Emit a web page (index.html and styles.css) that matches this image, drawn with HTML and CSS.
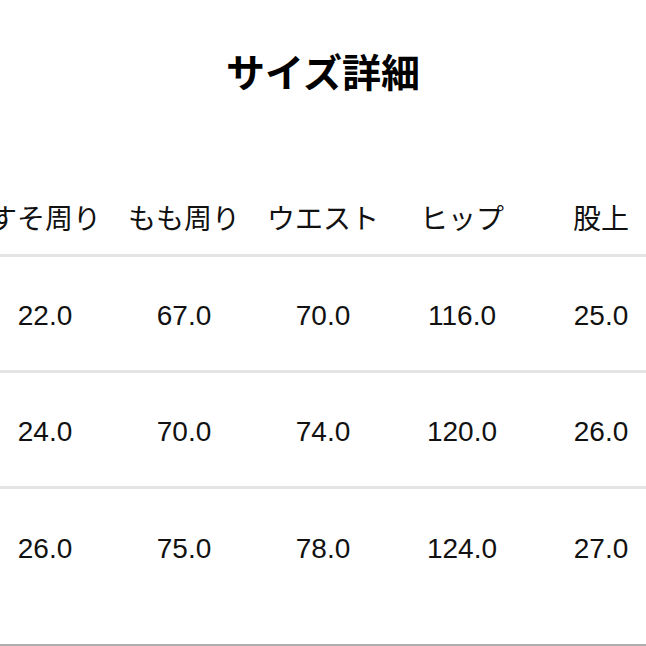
FILE: index.html
```html
<!DOCTYPE html>
<html lang="ja">
<head>
<meta charset="utf-8">
<link rel="stylesheet" href="styles.css">
</head>
<body>
<div class="page">
  <h1 class="title">サイズ詳細</h1>
  <div class="table-wrap">
    <div class="table">
      <div class="row head">
        <div class="cell">すそ周り</div>
        <div class="cell">もも周り</div>
        <div class="cell">ウエスト</div>
        <div class="cell">ヒップ</div>
        <div class="cell">股上</div>
      </div>
      <div class="row">
        <div class="cell">22.0</div>
        <div class="cell">67.0</div>
        <div class="cell">70.0</div>
        <div class="cell">116.0</div>
        <div class="cell">25.0</div>
      </div>
      <div class="row">
        <div class="cell">24.0</div>
        <div class="cell">70.0</div>
        <div class="cell">74.0</div>
        <div class="cell">120.0</div>
        <div class="cell">26.0</div>
      </div>
      <div class="row last">
        <div class="cell">26.0</div>
        <div class="cell">75.0</div>
        <div class="cell">78.0</div>
        <div class="cell">124.0</div>
        <div class="cell">27.0</div>
      </div>
    </div>
  </div>
  <div class="bottom-line"></div>
</div>
</body>
</html>
```

FILE: styles.css
```css
html, body {
  margin: 0;
  padding: 0;
  background: #ffffff;
}

body {
  font-family: "Liberation Sans", "Noto Sans CJK JP", sans-serif;
  color: #111111;
}

.page {
  width: 646px;
  height: 646px;
  overflow: hidden;
  display: flex;
  flex-direction: column;
}

.title {
  margin: 0;
  padding-top: 51px;
  font-family: "Noto Sans CJK JP", sans-serif;
  font-size: 39px;
  line-height: 39px;
  font-weight: 700;
  text-align: center;
  color: #000000;
}

.table-wrap {
  display: flex;
  justify-content: center;
  margin-top: 90px;
}

.table {
  flex: 0 0 695px;
  width: 695px;
}

.row {
  box-sizing: border-box;
  display: grid;
  grid-template-columns: repeat(5, 139px);
  align-items: center;
  height: 116px;
  padding-top: 4px;
  border-bottom: 3px solid #e4e4e4;
}

.row.head {
  height: 77px;
  padding-top: 0;
  font-family: "Noto Sans CJK JP", sans-serif;
}

.row.last {
  border-bottom: none;
}

.cell {
  text-align: center;
  font-size: 28px;
  line-height: 32px;
  white-space: nowrap;
}

.bottom-line {
  margin-top: auto;
  height: 2px;
  background: #adadad;
}
```
